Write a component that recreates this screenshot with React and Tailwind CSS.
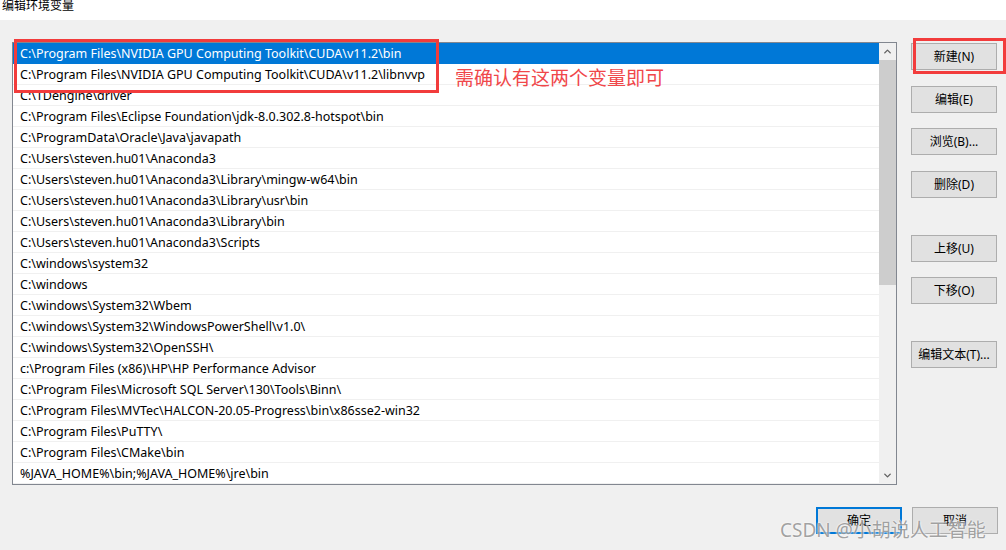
import { ChevronUp, ChevronDown } from "lucide-react";

const paths = [
  "C:\\Program Files\\NVIDIA GPU Computing Toolkit\\CUDA\\v11.2\\bin",
  "C:\\Program Files\\NVIDIA GPU Computing Toolkit\\CUDA\\v11.2\\libnvvp",
  "C:\\TDengine\\driver",
  "C:\\Program Files\\Eclipse Foundation\\jdk-8.0.302.8-hotspot\\bin",
  "C:\\ProgramData\\Oracle\\Java\\javapath",
  "C:\\Users\\steven.hu01\\Anaconda3",
  "C:\\Users\\steven.hu01\\Anaconda3\\Library\\mingw-w64\\bin",
  "C:\\Users\\steven.hu01\\Anaconda3\\Library\\usr\\bin",
  "C:\\Users\\steven.hu01\\Anaconda3\\Library\\bin",
  "C:\\Users\\steven.hu01\\Anaconda3\\Scripts",
  "C:\\windows\\system32",
  "C:\\windows",
  "C:\\windows\\System32\\Wbem",
  "C:\\windows\\System32\\WindowsPowerShell\\v1.0\\",
  "C:\\windows\\System32\\OpenSSH\\",
  "c:\\Program Files (x86)\\HP\\HP Performance Advisor",
  "C:\\Program Files\\Microsoft SQL Server\\130\\Tools\\Binn\\",
  "C:\\Program Files\\MVTec\\HALCON-20.05-Progress\\bin\\x86sse2-win32",
  "C:\\Program Files\\PuTTY\\",
  "C:\\Program Files\\CMake\\bin",
  "%JAVA_HOME%\\bin;%JAVA_HOME%\\jre\\bin",
];

function Btn({ children, className = "" }) {
  return (
    <div
      className={
        "w-[86px] h-[27px] flex items-center justify-center border border-[#adadad] bg-[#e1e1e1] text-[12px] text-black " +
        className
      }
    >
      {children}
    </div>
  );
}

export default function App() {
  const font = { fontFamily: '"Noto Sans", "Noto Sans CJK SC", sans-serif' };

  return (
    <div className="relative w-[1006px] h-[550px] overflow-hidden bg-[#f0f0f0]" style={font}>
      {/* title bar, cut at top */}
      <div className="h-[20px] bg-white overflow-hidden">
        <div className="pl-[2px] -mt-[1px] text-[12px] leading-[14px] text-black">编辑环境变量</div>
      </div>

      <div className="flex pt-[22px]">
        {/* list */}
        <div className="ml-[12px] w-[885px] h-[443px] border border-[#828790] bg-white flex">
          <div className="flex-1 flex flex-col">
            {paths.map((p, i) => (
              <div
                key={i}
                className={
                  "h-[21px] pl-[7px] pt-[2px] flex items-center text-[12.5px] whitespace-nowrap " +
                  (i === 0
                    ? "bg-[#0078d7] text-white"
                    : "text-black border-b border-[#f0f0f0]")
                }
              >
                {p}
              </div>
            ))}
          </div>
          <div className="w-[17px] bg-[#f0f0f0] flex flex-col">
            <div className="h-[17px] flex items-center justify-center text-[#606060]">
              <ChevronUp size={11} strokeWidth={3} />
            </div>
            <div className="h-[225px] bg-[#cdcdcd]" />
            <div className="flex-1" />
            <div className="h-[17px] flex items-center justify-center text-[#606060]">
              <ChevronDown size={11} strokeWidth={3} />
            </div>
          </div>
        </div>

        {/* side buttons */}
        <div className="ml-[14px] pt-[1px] flex flex-col">
          <Btn>新建(N)</Btn>
          <Btn className="mt-[16px]">编辑(E)</Btn>
          <Btn className="mt-[15px]">浏览(B)...</Btn>
          <Btn className="mt-[16px]">删除(D)</Btn>
          <Btn className="mt-[37px]">上移(U)</Btn>
          <Btn className="mt-[15px]">下移(O)</Btn>
          <Btn className="mt-[37px]">编辑文本(T)...</Btn>
        </div>
      </div>

      {/* bottom buttons */}
      <div className="flex justify-end gap-[10px] pr-[8px] mt-[22px]">
        <div className="w-[86px] h-[27px] flex items-center justify-center border-2 border-[#0078d7] bg-[#e1e1e1] text-[12px]">
          确定
        </div>
        <Btn>取消</Btn>
      </div>

      {/* annotations */}
      <div className="absolute left-[14px] top-[39px] w-[425px] h-[54px] border-[3px] border-[#f23c3c]" />
      <div className="absolute left-[455px] top-[66px] text-[19px] leading-[24px] text-[#f0474a]">
        需确认有这两个变量即可
      </div>
      <div className="absolute left-[913px] top-[38px] w-[93px] h-[36px] border-[3px] border-[#f23c3c]" />

      {/* watermark */}
      <div
        className="absolute left-[780px] top-[517px] text-[19px] leading-[26px] text-[#9a9a9a] opacity-90 whitespace-nowrap"
        style={{ textShadow: "0 0 2px #fff, 0 0 2px #fff" }}
      >
        CSDN @小胡说人工智能
      </div>
    </div>
  );
}
